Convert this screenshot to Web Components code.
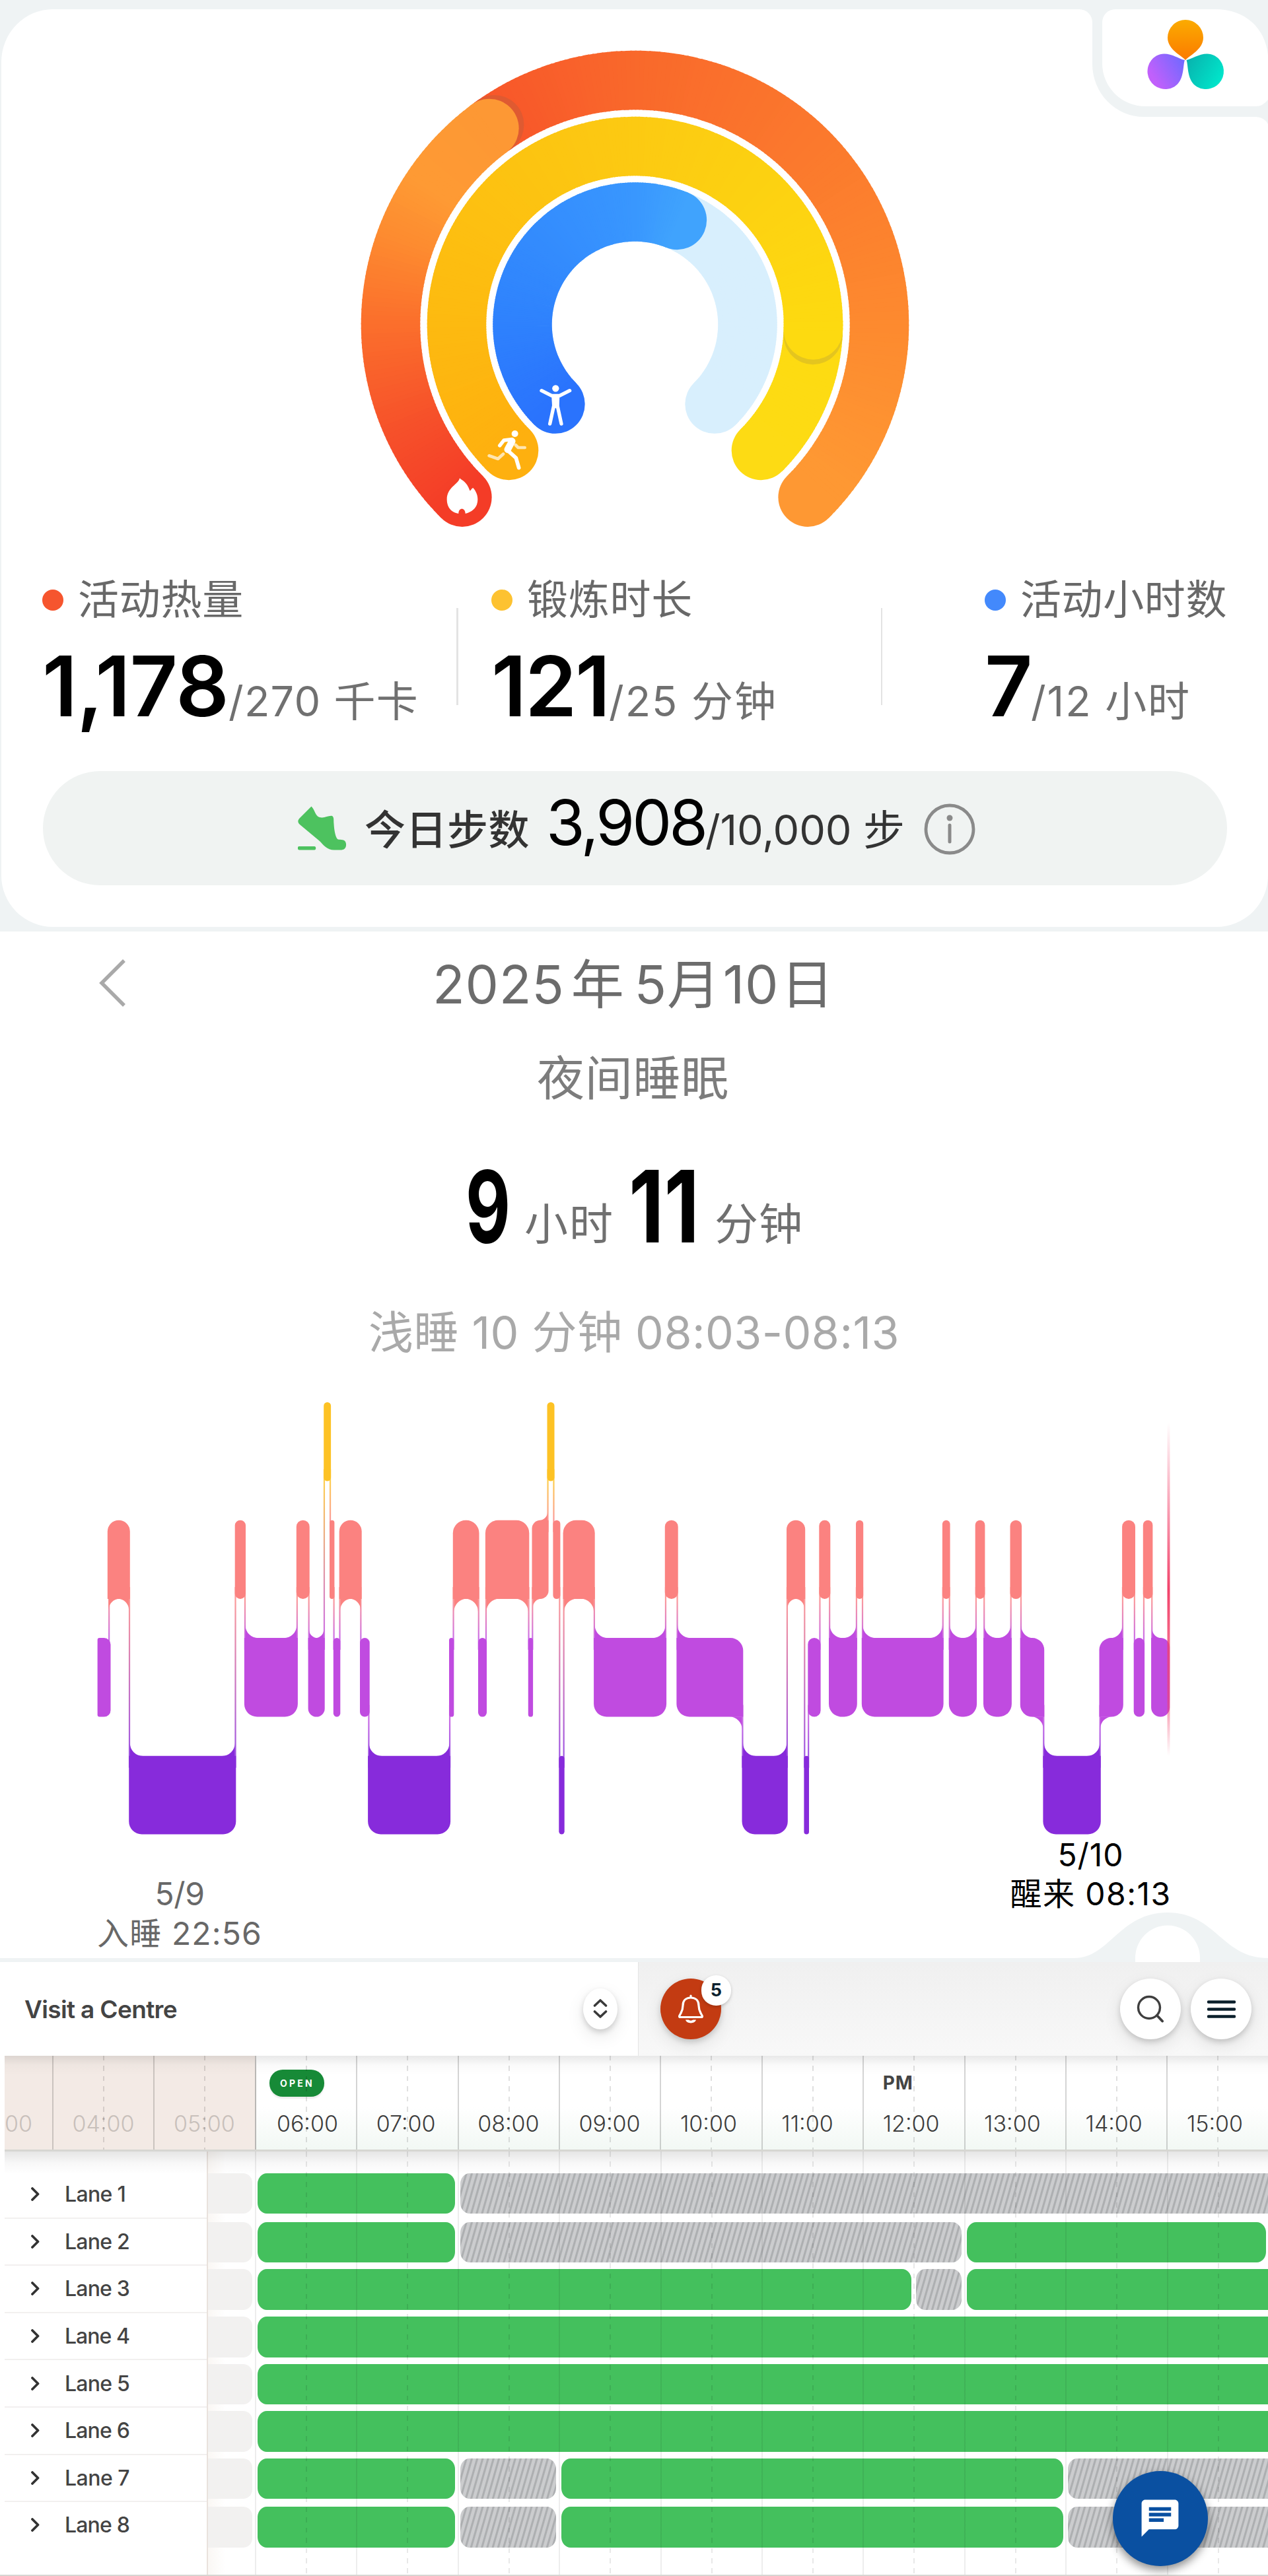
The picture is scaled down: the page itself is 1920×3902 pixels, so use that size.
<!DOCTYPE html>
<html lang="zh-CN">
<head>
<meta charset="utf-8">
<title>Health &amp; Lanes</title>
<style>
body{margin:0;width:1920px;background:#fff;font-family:Inter,"Noto Sans CJK SC",sans-serif;overflow-x:hidden}
</style>
</head>
<body>
<activity-card></activity-card>
<sleep-panel></sleep-panel>
<centre-bar></centre-bar>
<lane-timeline></lane-timeline>
<script>
const define=(name,html,setup)=>customElements.define(name,class extends HTMLElement{
  connectedCallback(){
    if(this.shadowRoot)return;
    const r=this.attachShadow({mode:'open'});
    r.innerHTML=typeof html==='function'?html(this):html;
    if(setup)setup.call(this,r);
  }
});

/* Text tracked (or squeezed, with the "squeeze" attribute) to a given advance width. */
define('fit-text',`<style>:host{display:inline-block;white-space:pre}span{display:inline-block;transform-origin:0 50%}</style><span><slot></slot></span>`,function(r){
  const s=r.querySelector('span'),w=+this.getAttribute('w'),n=s.getBoundingClientRect().width;
  if(this.hasAttribute('squeeze')){s.style.transform=`scaleX(${w/n})`;this.style.width=w+'px';}
  else s.style.letterSpacing=(w-n)/[...this.textContent].length+'px';
});

/* ---------- activity rings ---------- */
const CX=961.5,CY=491.5;
const pt=(r,s)=>{const t=(s-135)*Math.PI/180;return [CX+r*Math.sin(t),CY-r*Math.cos(t)]};
const mix=(stops,s)=>{
  let i=0;while(i<stops.length-2&&s>stops[i+1][0])i++;
  const [a,ca]=stops[i],[b,cb]=stops[i+1],k=Math.max(0,Math.min(1,(s-a)/(b-a)));
  const h=c=>[1,3,5].map(j=>parseInt(c.slice(j,j+2),16)),x=h(ca),y=h(cb);
  return `rgb(${x.map((v,j)=>Math.round(v+(y[j]-v)*k))})`;
};
const arc=(r,from,to,stops,w=89.5)=>{
  const cap=s=>{const[x,y]=pt(r,s);return `<circle cx="${x}" cy="${y}" r="${w/2}" fill="${mix(stops,s)}"/>`};
  let o=cap(from)+cap(to);
  for(let s=from;s<to;s+=1){
    const e=Math.min(to,s+1.35),[x1,y1]=pt(r,s),[x2,y2]=pt(r,e);
    o+=`<path d="M${x1.toFixed(2)} ${y1.toFixed(2)}A${r} ${r} 0 0 1 ${x2.toFixed(2)} ${y2.toFixed(2)}" stroke="${mix(stops,s)}" stroke-width="${w}" fill="none"/>`;
  }
  return o;
};
const dot=(r,s,c)=>{const[x,y]=pt(r,s);return `<circle cx="${x}" cy="${y}" r="44.7" fill="${c}"/>`};
define('activity-rings',()=>`<style>:host{display:block}svg{display:block}</style>
<svg width="1920" height="860" viewBox="0 0 1920 860">
${arc(370,99,270,[[98,'#f8552a'],[135,'#f9692b'],[180,'#fb792d'],[225,'#fd8a2f'],[262,'#fe9833'],[270,'#fe9833']])}
${dot(370,99.9,'#df5a31')}
${arc(370,0,98.4,[[0,'#f43c27'],[20,'#f6502a'],[45,'#fb6f2c'],[65,'#fd8c30'],[78,'#fe9a34'],[98.4,'#fd9834']])}
${arc(270,224,270,[[200,'#fdda10'],[270,'#fddb14']])}
${dot(270,228.4,'#e4c51f')}
${arc(270,0,226.8,[[0,'#feb00f'],[50,'#fdbb10'],[135,'#fcca12'],[226,'#fdda10']])}
${arc(170.5,150,270,[[150,'#d8effd'],[270,'#d8effd']])}
${arc(170.5,0,157,[[0,'#2a73fd'],[50,'#2f83fd'],[135,'#3997fe'],[157,'#40a3fd']])}
<g transform="translate(670 575) scale(.3333)" fill="#fff" stroke-linecap="round" stroke-linejoin="round">
<path d="M78 448C88 458 110 464 124 504C128 508 130 495 139 492C146 500 160 518 160 544C160 578 140 600 104 609C103 580 73 580 73 609C42 604 20 582 20 545C20 488 72 478 78 448Z"/>
<circle cx="514" cy="40" r="15.500"/>
<path d="M450 50L496 73H532L578 50M504 78L506 118L488 201M524 78L522 118L540 201" fill="none" stroke="#fff" stroke-width="16"/>
<path d="M497 70H531L529 130H499Z"/>
<g fill="none" stroke="#fff">
<path d="M276 338L252 360L212 346M332 297L344 309H374" stroke-width="14" opacity=".68"/>
<path d="M260 300L279 276L316 271" stroke-width="16"/>
<path d="M316 280L296 318" stroke-width="31"/>
<path d="M294 320L334 356L347 401" stroke-width="17"/></g>
<circle cx="329" cy="246" r="15"/>
</g></svg>`);

define('stat-block',el=>`<style>
:host{display:block;box-sizing:border-box}
.l{display:flex;align-items:center;gap:22px;height:98px;font-size:62px;line-height:98px;color:#686868}
i{width:32px;height:32px;border-radius:50%;background:${el.getAttribute('dot')}}
.v{display:flex;align-items:baseline;height:162px;line-height:162px;color:#707070;font-size:63px;font-weight:400}
::slotted(b){font-size:126px;font-weight:570;color:#000}
::slotted(fit-text){white-space:pre}
</style><div class="l"><i></i><slot name="label"></slot></div><div class="v"><slot></slot></div>`);

define('steps-pill',`<style>
:host{display:flex;box-sizing:border-box;align-items:center;height:173px;width:1793px;margin:48px 0 0 65px;padding-left:386px;border-radius:87px;background:#f0f3f2}
svg{display:block;flex:none}
.t{display:flex;align-items:baseline;margin-left:27px;padding-bottom:5px;line-height:120px;color:#333;font-size:63px}
.t b{font-weight:400;color:#000;font-size:95px;margin-left:25px}
.c{font-size:62px;font-weight:500}
.info{margin-left:29px;margin-top:2px}
</style>
<svg width="74" height="68" viewBox="451 1222 74 68"><path fill="#4dc25f" d="M471.500 1222.500C477 1228 477 1237 484 1239C491 1241 497 1236 503 1237C506 1239 505 1243 505.500 1249C506 1258 508 1271 512 1272.500C515 1273.500 523 1271 524 1279C524.500 1285 522 1288.500 515 1288.500H506C495 1288.500 490 1281 484 1275L454 1250C450 1246 451 1243 454 1240ZM453 1283H476C479 1283 479 1288.500 476 1288.500H453C450 1288.500 450 1283 453 1283Z"/></svg>
<div class="t"><fit-text class="c" w="250">今日步数</fit-text><b><fit-text w="241">3,908</fit-text></b><fit-text w="302">/10,000 步</fit-text></div>
<svg class="info" width="78" height="78" viewBox="0 0 78 78"><circle cx="39" cy="39" r="36" fill="none" stroke="#8a8a8a" stroke-width="4.800"/><circle cx="39" cy="22" r="4.500" fill="#8a8a8a"/><path d="M39 33V58" stroke="#8a8a8a" stroke-width="5" stroke-linecap="round"/></svg>`);

define('activity-card',`<style>
:host{display:block;position:relative;height:1411px;background:#eff3f4}
.bg{position:absolute;left:0;top:0}
.in{position:relative}
.row{display:flex}
.row stat-block:nth-child(1){margin-left:64px;width:627px}
.row stat-block:nth-child(3){padding-left:50px;width:640px}
.row stat-block:nth-child(5){padding-left:155px}
hr{border:0;margin:61px 0 0;width:3px;height:147px;background:#e3e3e3}
hr.s{width:2px}
</style>
<svg class="bg" width="1920" height="1411" viewBox="0 0 1920 1411">
<defs>
<linearGradient id="o" x1="0" y1="0" x2="0" y2="1"><stop offset="0" stop-color="#fbab00"/><stop offset="1" stop-color="#fb7a00"/></linearGradient>
<linearGradient id="p" x1="0" y1="0" x2="0" y2="1"><stop offset=".1" stop-color="#c160fb"/><stop offset="1" stop-color="#6f69ff"/></linearGradient>
<linearGradient id="t" x1="0" y1="0" x2="0" y2="1"><stop offset="0" stop-color="#00e6cb"/><stop offset="1" stop-color="#08b3ae"/></linearGradient></defs>
<path fill="#fff" d="M2 94A78 80 0 0 1 80 14H1634A20 20 0 0 1 1654 34V97A78 80 0 0 0 1732 177H1902Q1915 178 1920 188V1326A78 78 0 0 1 1842 1404H80A78 78 0 0 1 2 1326Z"/>
<path fill="#fff" d="M1689 14H1840C1885 14 1916 42 1920 84V151Q1912 161 1902 161H1734A65 65 0 0 1 1669 96V34A20 20 0 0 1 1689 14Z"/>
<path transform="translate(1795 57)" fill="url(#o)" d="M0 34C-6 27-27 18-27 0A27 27 0 1 1 27 0C27 18 6 27 0 34Z"/>
<path transform="translate(1764.500 108) rotate(-120)" fill="url(#p)" d="M0 34C-6 27-27 18-27 0A27 27 0 1 1 27 0C27 18 6 27 0 34Z"/>
<path transform="translate(1826 108) rotate(120)" fill="url(#t)" d="M0 34C-6 27-27 18-27 0A27 27 0 1 1 27 0C27 18 6 27 0 34Z"/>
</svg>
<div class="in"><activity-rings></activity-rings>
<div class="row">
<stat-block dot="#f6552e"><fit-text slot="label" w="251">活动热量</fit-text><b><fit-text w="282">1,178</fit-text></b><fit-text w="288">/270 千卡</fit-text></stat-block>
<hr>
<stat-block dot="#fdc231"><fit-text slot="label" w="251">锻炼时长</fit-text><b><fit-text w="178">121</fit-text></b><fit-text w="255">/25 分钟</fit-text></stat-block>
<hr class="s">
<stat-block dot="#4389fc"><fit-text slot="label" w="313">活动小时数</fit-text><b><fit-text w="70">7</fit-text></b><fit-text w="242">/12 小时</fit-text></stat-block>
</div>
<steps-pill></steps-pill></div>`);

/* ---------- sleep stages ---------- */
const LV={Y:[2124,2243.5,'#fdc224'],C:[2302.7,2422,'#fb8280'],P:[2481,2600.6,'#c04be0'],D:[2659.7,2778.5,'#872bdb']};
const ORDER='YCPD';
const STAGES=`P147.6-167.5 C162.8-196.8 D195.2-357.3 C355.7-372 P369.9-450.9 C448.8-468.7 P466.6-491.7 Y490.2-501.1 C499-506.4 P504.8-515.3 C513.7-547.7 P545-559.7 D557.1-682.1 P680-687.3 C685.8-725.5 P724-737 C734.9-801.3 P799.8-807.1 C805.5-830.6 Y828.5-839.5 C837.4-848.4 D846.3-854.7 C852.6-900.7 P899.1-1009.1 C1006.8-1026.7 P1024.4-1125.3 D1123.5-1192.8 C1191-1219.2 D1217.4-1225 P1223.3-1242.6 C1240.3-1257.3 P1255-1297.8 C1296-1307.2 P1304.8-1428.6 C1426.9-1438.6 P1436.8-1479.1 C1476.7-1491.4 P1489-1531.9 C1529.5-1547.1 P1544.8-1581.2 D1579.4-1666.8 P1664.5-1700.8 C1699.1-1719 P1716.7-1733.1 C1730.8-1745.4 P1743.1-1771.2`.split(' ').map(s=>{const[a,b]=s.slice(1).split('-').map(Number);return{k:s[0],a,b}});
define('sleep-chart',()=>{
  let defs='',lines='',blocks='';
  const rank=s=>ORDER.indexOf(s.k);
  STAGES.forEach((s,i)=>{
    const [t,b,c]=LV[s.k],w=s.b-s.a,r=Math.min(w/2,19.5),wide=w>=24.5;
    const side=n=>n?(rank(n)<rank(s)?'up':'down'):'';
    const L=side(STAGES[i-1]),R=side(STAGES[i+1]);
    const up={l:wide&&L==='up',r:wide&&R==='up'},dn={l:wide&&L==='down',r:wide&&R==='down'};
    const tl=up.l?0:r,tr=up.r?0:r,bl=dn.l?0:r,br=dn.r?0:r,flat=i===0?3:0;
    blocks+=`<path fill="${c}" d="M${s.a+(flat||tl)} ${t}H${s.b-tr}A${tr} ${tr} 0 0 1 ${s.b} ${t+tr}V${b-br}A${br} ${br} 0 0 1 ${s.b-br} ${b}H${s.a+(flat||bl)}A${flat||bl} ${flat||bl} 0 0 1 ${s.a} ${b-(flat||bl)}V${t+(flat||tl)}A${flat||tl} ${flat||tl} 0 0 1 ${s.a+(flat||tl)} ${t}Z"/>`;
    const f=(x,y,dx,dy,sw)=>blocks+=`<path fill="${c}" d="M${x} ${y}H${x+dx*r}A${r} ${r} 0 0 ${sw} ${x} ${y+dy*r}Z"/>`;
    if(up.l)f(s.a+1.6,t+.3,1,-1,1);
    if(up.r)f(s.b-1.6,t+.3,-1,-1,0);
    if(dn.l)f(s.a+1.6,b-.3,1,1,0);
    if(dn.r)f(s.b-1.6,b-.3,-1,1,1);
    const n=STAGES[i+1];
    if(n){
      const down=rank(n)>rank(s),A=down?s:n,B=down?n:s,x=(s.b+n.a)/2;
      const y1=LV[A.k][1]-18,y2=LV[B.k][0]+18;
      defs+=`<linearGradient id="g${i}" x1="0" y1="${y1+18}" x2="0" y2="${y2-18}" gradientUnits="userSpaceOnUse"><stop stop-color="${LV[A.k][2]}"/><stop offset="1" stop-color="${LV[B.k][2]}"/></linearGradient>`;
      lines+=`<rect x="${x-1.1}" y="${y1}" width="2.2" height="${y2-y1}" fill="url(#g${i})" opacity=".8"/>`;
    }
  });
  return `<style>:host{display:block}svg{display:block;overflow:visible}</style>
<svg width="1920" height="702.5" viewBox="0 2077 1920 702.5"><defs>${defs}<linearGradient id="now" x1="0" x2="0" y1="0" y2="1"><stop stop-color="#f2436b" stop-opacity="0"/><stop offset=".5" stop-color="#f2436b"/><stop offset=".83" stop-color="#f2436b" stop-opacity=".6"/><stop offset="1" stop-color="#f2436b" stop-opacity="0"/></linearGradient></defs>${lines}${blocks}<rect x="1767.500" y="2155" width="4" height="505" fill="url(#now)"/></svg>`;
});

define('sleep-panel',`<style>
:host{display:block;position:relative;height:1561px;background:#fff}
.h{display:flex;align-items:center;height:160px;line-height:160px;font-size:80px;color:#6c6c6c}
.h svg{margin:-4px 463px 0 148px}
.n{height:124px;line-height:124px;font-size:72px;color:#7c7c7c;padding-left:813px}
.d{display:flex;align-items:baseline;height:264px;line-height:264px;font-size:66px;color:#707070;padding-left:705px}
.d b{font-size:151px;font-weight:680;color:#000}
.u{transform:translateY(-4px)}
.s{height:118px;line-height:118px;font-size:68px;color:#a9a9a9;padding-left:558px}
.x{display:flex;justify-content:space-between;height:192.500px;font-size:48px;line-height:59.500px;text-align:center;box-sizing:border-box;padding:0 147px 0 147px}
.x>div{display:flex;flex-direction:column;align-items:center}
.l{color:#686868;padding-top:59.500px;width:250px}
.r{color:#000;width:243px}
.e{position:absolute;left:0;bottom:0}
</style>
<div class="h"><svg width="44" height="76" viewBox="0 0 44 76"><path d="M40 4L6 38L40 72" fill="none" stroke="#a9a9a9" stroke-width="5.500"/></svg><fit-text w="608">2025<span style="margin:0 15px 0 10px">年</span>5<span style="margin-right:4px">月</span>10<span style="margin-left:3px">日</span></fit-text></div>
<div class="n"><fit-text w="291">夜间睡眠</fit-text></div>
<div class="d"><b><fit-text squeeze w="68">9</fit-text></b><fit-text class="u" style="margin-left:21px" w="136">小时</fit-text><b style="margin-left:22px"><fit-text squeeze w="107">11</fit-text></b><fit-text class="u" style="margin-left:23px" w="134">分钟</fit-text></div>
<div class="s"><fit-text w="804">浅睡 10 分钟 08:03-08:13</fit-text></div>
<sleep-chart></sleep-chart>
<svg class="e" width="1920" height="80" viewBox="0 2892 1920 80"><path fill="#eff3f4" d="M0 2966H1627C1680 2966 1695 2897 1768 2897S1850 2966 1920 2966V2972H0Z"/><path fill="#fff" d="M1719 2972V2966A49 49.500 0 0 1 1817 2966V2972Z"/></svg>
<div class="x"><div class="l"><fit-text w="75">5/9</fit-text><fit-text w="250">入睡 22:56</fit-text></div><div class="r"><fit-text w="100">5/10</fit-text><fit-text w="244">醒来 08:13</fit-text></div></div>`);

/* ---------- centre header ---------- */
define('round-button',`<style>:host{display:flex;align-items:center;justify-content:center;box-sizing:border-box;width:92px;height:92px;border-radius:50%;background:#fff;box-shadow:0 4px 8px rgba(0,0,0,.16),0 10px 28px rgba(0,0,0,.09)}</style><slot></slot>`);
define('centre-bar',`<style>
:host{display:flex;height:142px;position:relative;z-index:2}
.a{box-sizing:border-box;width:967px;display:flex;align-items:center;justify-content:space-between;padding:0 31px 0 37px;background:#fff;border-right:1.500px solid #e4e4e4;font-size:37px;font-weight:600;color:#444}
.a round-button{width:52px;height:62px;border-radius:26px/31px}
.b{flex:1;display:flex;align-items:center;padding:0 25px 0 33px;background:linear-gradient(#f0f0f0,#f8f8f8);box-sizing:border-box}
.bell{background:#c33b12;position:relative}
.n{position:absolute;left:62px;top:-5px;width:45px;height:46px;border-radius:22px;background:#fff;color:#0b1f2d;font:700 27px/46px Inter,sans-serif;text-align:center;box-shadow:0 2px 5px rgba(0,0,0,.2)}
.sp{flex:1}.m{margin-left:15px}
svg{display:block}
</style>
<div class="a"><fit-text w="231">Visit a Centre</fit-text><round-button><svg width="24" height="32" viewBox="0 0 24 32"><path d="M3.500 11L12 3L20.500 11M3.500 20L12 28L20.500 20" fill="none" stroke="#3a3a3a" stroke-width="3.600" stroke-linecap="round" stroke-linejoin="round"/></svg></round-button></div>
<div class="b"><round-button class="bell"><svg width="40" height="44" viewBox="0 0 40 44"><path d="M20 5C12 5 8 10 8 17C8 25 5 28 3 32C2 34 3 34.500 4 34.500H36C37 34.500 38 34 37 32C35 28 32 25 32 17C32 10 28 5 20 5ZM20 5V2" fill="none" stroke="#fff" stroke-width="3.200" stroke-linecap="round" stroke-linejoin="round"/><path d="M12 38.500H28C26 45 14 45 12 38.500Z" fill="#fff"/><path d="M16 37.500H24Q20 42 16 37.500Z" fill="#c33b12"/></svg><span class="n">5</span></round-button><span class="sp"></span>
<round-button><svg width="42" height="42" viewBox="0 0 42 42"><circle cx="19" cy="19" r="16.500" fill="none" stroke="#3f3f3f" stroke-width="3.400"/><path d="M31 31L39 39.500" stroke="#3f3f3f" stroke-width="4" stroke-linecap="round"/></svg></round-button>
<round-button class="m"><svg width="43" height="27" viewBox="0 0 43 27"><path d="M2 2.500H41M2 13.500H41M2 24.500H41" stroke="#0a1f2b" stroke-width="4.400" stroke-linecap="round"/></svg></round-button></div>`);

/* ---------- timeline ---------- */
define('hour-lines',`<style>
:host{position:absolute;top:0;bottom:0;pointer-events:none}
div{position:absolute;inset:0;background:repeating-linear-gradient(90deg,var(--solid) 0 2px,transparent 2px 153.400px)}
.d{background:repeating-linear-gradient(90deg,var(--dash) 0 2px,transparent 2px 153.400px);left:76.700px;-webkit-mask:repeating-linear-gradient(180deg,#000 0 7.500px,transparent 7.500px 15.400px);mask:repeating-linear-gradient(180deg,#000 0 7.500px,transparent 7.500px 15.400px)}
</style><div></div><div class="d"></div>`);
define('hour-cell',el=>`<style>
:host{display:block;box-sizing:border-box;flex:none;width:153.400px;padding-left:30px;font-weight:300;color:#3c3c3c}
.t{height:77px;padding-top:5px;box-sizing:border-box;display:flex;align-items:center;font:700 28px/42px Inter,sans-serif;color:#444}
.h{font-size:34px;line-height:52px;height:52px;white-space:nowrap}
</style><div class="t"><slot></slot></div><div class="h">${el.getAttribute('h')}</div>`);
define('open-tag',`<style>:host{display:block;box-sizing:border-box;width:83px;height:41px;margin-left:-11px;padding-left:16px;border-radius:20px;background:#178a37;color:#fff;font:700 14px/41px Inter,sans-serif;box-shadow:0 3px 2px rgba(0,0,0,.07)}</style><slot></slot>`);
define('lane-label',`<style>
:host{display:flex;align-items:center;box-sizing:border-box;height:71.600px;border-bottom:2px solid #f2f0ef;padding-left:40px;font-size:32px;font-weight:500;color:#444}
:host(:last-child){border-color:transparent}
svg{margin-right:38px}
</style><svg width="13" height="21" viewBox="0 0 13 21"><path d="M2 2L10.500 10.500L2 19" fill="none" stroke="#333" stroke-width="3.800" stroke-linecap="round" stroke-linejoin="round"/></svg><slot></slot>`);
/* "bars" lists type:start-end in page units; the track begins at 315. */
define('lane-track',el=>{
  let x=315,o='';
  for(const b of ('x:315-382,'+el.getAttribute('bars')).split(',')){
    const [k,se]=b.split(':'),[s,e]=se.split('-').map(Number);
    o+=`<i class="${k}${e>1920?' end':''}" style="margin-left:${s-x}px;width:${Math.min(e,1920)-s}px"></i>`;x=Math.min(e,1920);
  }
  return `<style>
:host{display:flex;height:61.500px}
i{display:block;flex:none;border-radius:14px/16px}
.x{background:#f2f1f0;border-radius:0 14px 14px 0}
.g{background:#44c05d}
.s{background:#cbccce repeating-linear-gradient(106deg,#adafb1 0 2px,#cbccce 3.200px 6.900px,#adafb1 7.900px)}
.end{border-top-right-radius:0;border-bottom-right-radius:0}
</style>${o}`;
});
define('lane-timeline',()=>{
  const hrs=['04:00','05:00','06:00','07:00','08:00','09:00','10:00','11:00','12:00','13:00','14:00','15:00'];
  const lanes=[[32.7,'g:390-689,s:696.7-2000'],[12.7,'g:390-689,s:696.7-1456,g:1464-1917'],[10,'g:390-1380,s:1387-1456,g:1464-2000'],[10.3,'g:390-2000'],[10.3,'g:390-2000'],[10,'g:390-2000'],[10,'g:390-689,s:696.7-842.4,g:849.7-1610,s:1617.5-2000'],[11.7,'g:390-689,s:696.7-842.4,g:849.7-1610,s:1617.5-2000']];
  return `<style>
:host{display:block;height:788px;position:relative;background:#fff;overflow:hidden}
.head{position:relative;box-sizing:border-box;height:145px;border-bottom:3px solid #d6d6d2;margin-left:7px;display:flex;background:linear-gradient(rgba(0,0,0,.09),rgba(0,0,0,.02) 14px,transparent 30px),linear-gradient(90deg,#f3eae5 380px,transparent 380px),linear-gradient(#fff 55%,#f2f8f4)}
.closed{color:#c8c0bb}
.first{width:72.600px;padding-left:0}
.head hour-lines{left:72px;right:0;--solid:rgba(0,0,0,.17);--dash:rgba(0,0,0,.12)}
.edge{position:absolute;left:379px;top:0;bottom:0;width:2px;background:#b9b7b5}
.body{display:flex;height:643px;position:relative;margin-left:7px}
.labels{box-sizing:border-box;width:308px;padding-top:30px;border-right:2px solid #e9e2dd}
.tracks{width:1605px;background:linear-gradient(90deg,#faf7f4,#fff 26px)}
.body hour-lines{left:379px;right:0;--solid:rgba(0,0,0,.07);--dash:rgba(0,0,0,.09)}
.shade{position:absolute;left:0;right:0;top:0;height:34px;background:linear-gradient(rgba(0,0,0,.1),rgba(0,0,0,.03) 50%,transparent)}
.foot{position:absolute;left:0;right:0;bottom:0;height:2px;background:#d6d6d2}
.chat{position:absolute;left:1685px;top:629px;width:143.500px;height:143.500px;background:#0a50a1;box-shadow:0 6px 14px rgba(0,0,0,.45)}
.chat svg{display:block}
</style>
<div class="head"><hour-lines></hour-lines><span class="edge"></span><hour-cell class="first closed" h="00"></hour-cell>${hrs.map((h,i)=>`<hour-cell ${i<2?'class="closed"':i===2?'style="padding-left:32.5px"':''} h="${h}">${h==='06:00'?'<open-tag><fit-text w="52">OPEN</fit-text></open-tag>':h==='12:00'?'<fit-text w="46">PM</fit-text>':''}</hour-cell>`).join('')}</div>
<div class="body"><div class="labels">${lanes.map((_,i)=>`<lane-label><fit-text w="${i?98:92}">Lane ${i+1}</fit-text></lane-label>`).join('')}</div>
<div class="tracks">${lanes.map(([m,b])=>`<lane-track style="margin-top:${m}px" bars="${b}"></lane-track>`).join('')}</div>
<hour-lines></hour-lines><div class="shade"></div></div>
<span class="foot"></span>
<round-button class="chat"><svg width="67" height="67" viewBox="0 0 24 24"><path fill="#fff" d="M20 2H4c-1.100 0-2 .9-2 2v18l4-4h14c1.100 0 2-.9 2-2V4c0-1.100-.9-2-2-2zM6 6h12v2H6V6zm8 8H6v-2h8v2zm4-3H6V9h12v2z"/></svg></round-button>`;
});
</script>
</body>
</html>
